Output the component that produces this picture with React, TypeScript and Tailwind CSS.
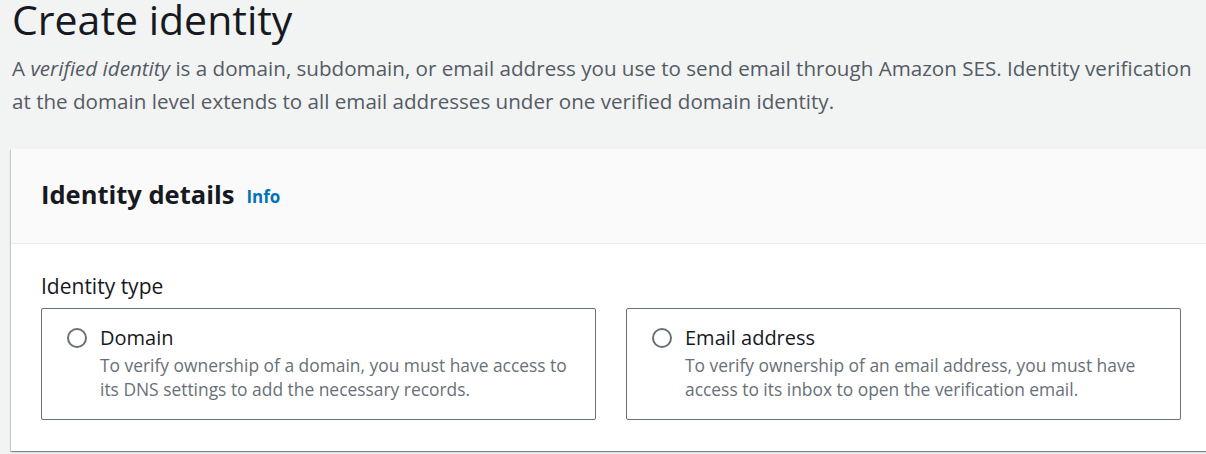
export default function App() {
  return (
    <div className="w-[1206px] h-[454px] overflow-hidden bg-[#f2f3f3] text-[#16191f]" style={{ fontFamily: '"Open Sans", "Noto Sans", Arial, sans-serif' }}>
      <div className="pl-[12px]">
        <h1 className="text-[41px] leading-[42px] -mt-[2px] font-normal text-[#16191f]">Create identity</h1>
        <p className="mt-[12px] text-[20.6px] leading-[33px] text-[#545b64] pr-[14px]">
          A <em>verified identity</em> is a domain, subdomain, or email address you use to send email through Amazon SES. Identity verification at the domain level extends to all email addresses under one verified domain identity.
        </p>
      </div>

      {/* Identity details card */}
      <div className="mt-[31px] ml-[11px] w-[1200px] bg-white shadow-[0_1px_1px_0_rgba(0,28,36,0.3),1px_1px_1px_0_rgba(0,28,36,0.15),-1px_1px_1px_0_rgba(0,28,36,0.15)]">
        <div className="h-[95px] bg-[#fafafa] border-b border-[#eaeded] px-[30px] flex items-center">
          <h2 className="text-[25.5px] font-bold text-[#16191f] -mt-[3px]">Identity details</h2>
          <a className="ml-[12px] mt-[2px] text-[17px] font-bold text-[#0073bb]">Info</a>
        </div>
        <div className="px-[30px] pt-[28px] pb-[31px]">
          <div className="text-[21px] leading-[28px] text-[#16191f]">Identity type</div>
          <div className="mt-[8px] grid grid-cols-2 gap-[30px] w-[1140px]">
            <Tile
              title="Domain"
              desc="To verify ownership of a domain, you must have access to its DNS settings to add the necessary records."
            />
            <Tile
              title="Email address"
              desc="To verify ownership of an email address, you must have access to its inbox to open the verification email."
            />
          </div>
        </div>
      </div>
    </div>
  );
}

function Tile({ title, desc }: { title: string; desc: string }) {
  return (
    <div className="h-[112px] border border-[#687078] rounded-[2px] pl-[25px] pr-[20px] pt-[16px] flex">
      <div className="mt-[3px] w-[20px] h-[20px] rounded-full border-2 border-[#687078] shrink-0" />
      <div className="ml-[13px]">
        <div className="text-[20px] leading-[26px] text-[#16191f]">{title}</div>
        <p className="mt-[2px] text-[17.4px] leading-[24px] text-[#687078] pr-[8px]">{desc}</p>
      </div>
    </div>
  );
}
